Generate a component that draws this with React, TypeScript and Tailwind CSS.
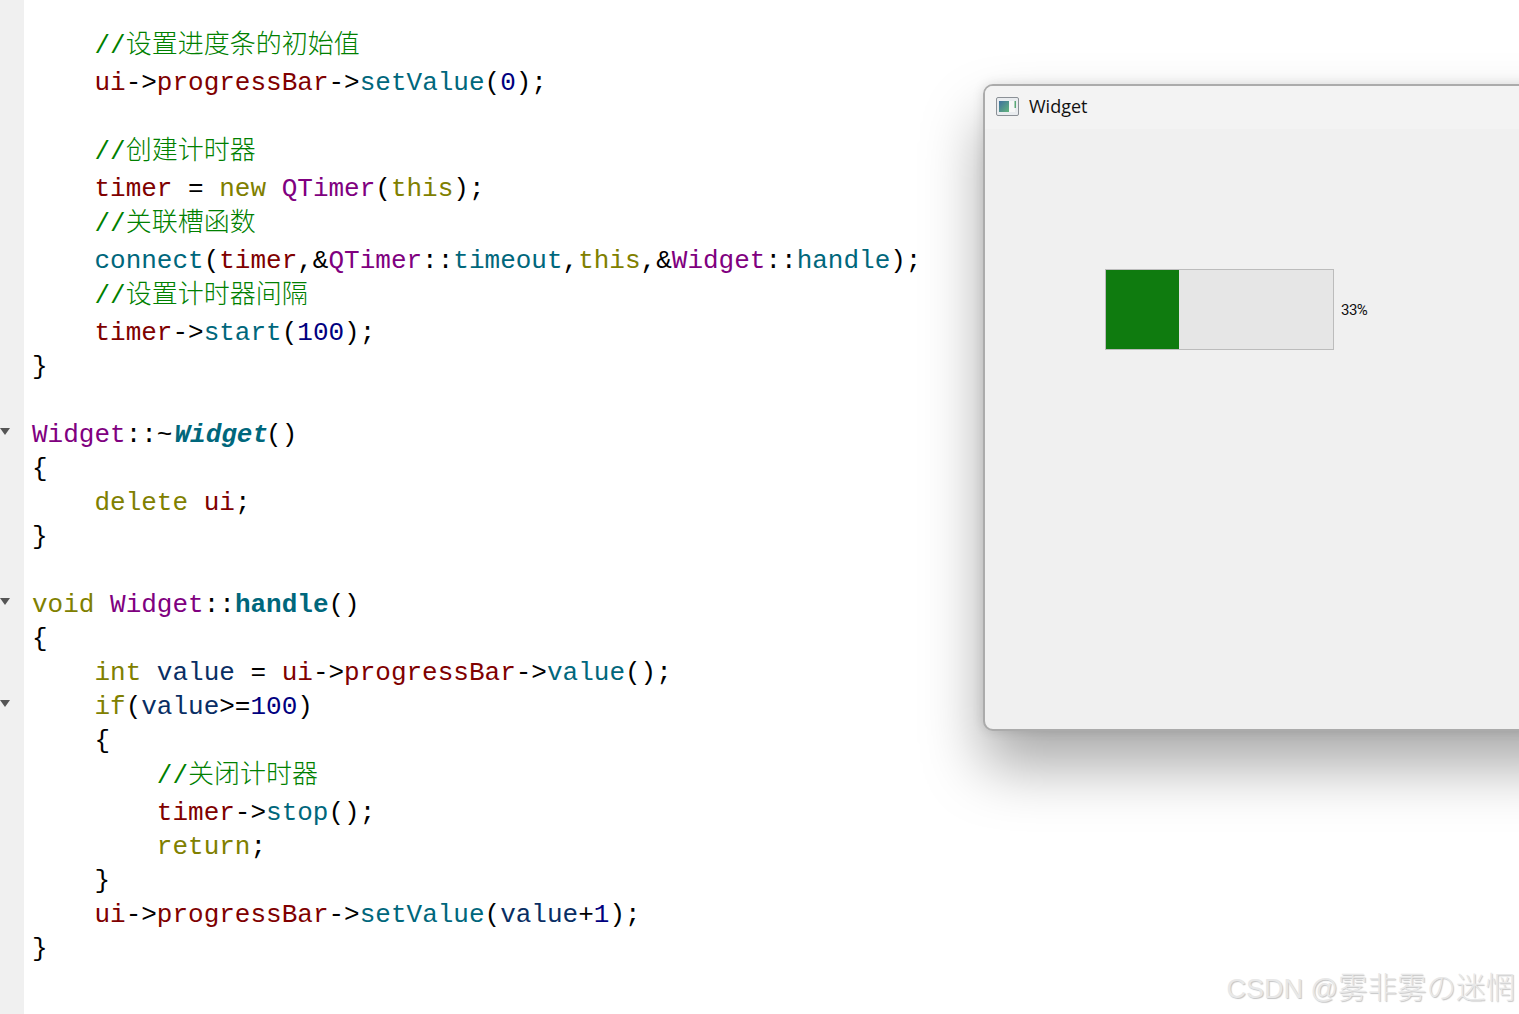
const r = "text-[#800000]"
const t = "text-[#00677c]"
const k = "text-[#808000]"
const p = "text-[#800080]"
const n = "text-[#000080]"
const v = "text-[#092e64]"
const b = "text-[#00677c] font-bold"
const i = "text-[#00677c] font-bold italic ml-[2px] -mr-[2px]"

type Token = [string, string?]
type Line = { tokens?: Token[]; comment?: string; indent?: number; fold?: boolean }

const lines: Line[] = [
  { indent: 1, comment: "设置进度条的初始值" },
  { indent: 1, tokens: [["ui", r], ["->"], ["progressBar", r], ["->"], ["setValue", t], ["("], ["0", n], [");"]] },
  {},
  { indent: 1, comment: "创建计时器" },
  { indent: 1, tokens: [["timer", r], [" = "], ["new", k], [" "], ["QTimer", p], ["("], ["this", k], [");"]] },
  { indent: 1, comment: "关联槽函数" },
  { indent: 1, tokens: [["connect", t], ["("], ["timer", r], [",&"], ["QTimer", p], ["::"], ["timeout", t], [","], ["this", k], [",&"], ["Widget", p], ["::"], ["handle", t], [");"]] },
  { indent: 1, comment: "设置计时器间隔" },
  { indent: 1, tokens: [["timer", r], ["->"], ["start", t], ["("], ["100", n], [");"]] },
  { tokens: [["}"]] },
  {},
  { fold: true, tokens: [["Widget", p], ["::~"], ["Widget", i], ["()"]] },
  { tokens: [["{"]] },
  { indent: 1, tokens: [["delete", k], [" "], ["ui", r], [";"]] },
  { tokens: [["}"]] },
  {},
  { fold: true, tokens: [["void", k], [" "], ["Widget", p], ["::"], ["handle", b], ["()"]] },
  { tokens: [["{"]] },
  { indent: 1, tokens: [["int", k], [" "], ["value", v], [" = "], ["ui", r], ["->"], ["progressBar", r], ["->"], ["value", t], ["();"]] },
  { indent: 1, fold: true, tokens: [["if", k], ["("], ["value", v], [">="], ["100", n], [")"]] },
  { indent: 1, tokens: [["{"]] },
  { indent: 2, comment: "关闭计时器" },
  { indent: 2, tokens: [["timer", r], ["->"], ["stop", t], ["();"]] },
  { indent: 2, tokens: [["return", k], [";"]] },
  { indent: 1, tokens: [["}"]] },
  { indent: 1, tokens: [["ui", r], ["->"], ["progressBar", r], ["->"], ["setValue", t], ["("], ["value", v], ["+"], ["1", n], [");"]] },
  { tokens: [["}"]] },
]

const CodeLine = ({ line }: { line: Line }) => {
  const pad = "    ".repeat(line.indent ?? 0)
  return (
    <div className={`relative whitespace-pre ${line.comment ? "h-[38px] leading-[30px]" : "h-[34px] leading-[36px]"}`}>
      {line.fold && (
        <div className="absolute left-[-32px] top-[11px] w-0 h-0 border-l-[5px] border-r-[5px] border-t-[7px] border-l-transparent border-r-transparent border-t-[#555]" />
      )}
      {pad}
      {line.comment && (
        <span className="text-[#008000]">
          //<span className="font-['Noto_Sans_CJK_SC',sans-serif] font-light">{line.comment}</span>
        </span>
      )}
      {line.tokens?.map(([text, color], idx) => (
        <span key={idx} className={color ?? "text-black"}>
          {text}
        </span>
      ))}
    </div>
  )
}

const WindowIcon = () => (
  <svg width="23" height="19" viewBox="0 0 23 19">
    <defs>
      <linearGradient id="ico" x1="0" y1="0" x2="1" y2="1">
        <stop offset="0" stopColor="#3f6f9f" />
        <stop offset="1" stopColor="#63b57c" />
      </linearGradient>
    </defs>
    <rect x="0.5" y="0.5" width="22" height="18" rx="1.5" fill="#e9ecef" stroke="#8b9096" />
    <rect x="3" y="4" width="10" height="11" fill="url(#ico)" />
    <rect x="13" y="4" width="6" height="11" fill="#f7f7f7" />
    <rect x="18.5" y="4" width="1.5" height="7" fill="#5aa877" />
  </svg>
)

const App = () => {
  return (
    <div className="relative w-[1519px] h-[1014px] overflow-hidden bg-white">
      <div className="flex h-full">
        <div className="w-6 shrink-0 bg-[#f0f0f0]" />
        <div className="pl-2 pt-[27px] text-[26px] font-['Liberation_Mono','Noto_Sans_CJK_SC',monospace]">
          {lines.map((line, idx) => (
            <CodeLine key={idx} line={line} />
          ))}
        </div>
      </div>

      <div className="absolute left-[983px] top-[84px] w-[600px] h-[647px] rounded-[10px] border-2 border-[#ababab] bg-[#f0f0f0] shadow-[0_35px_60px_rgba(0,0,0,0.34),0_0_12px_rgba(0,0,0,0.12)] overflow-hidden">
        <div className="h-[43px] flex items-center gap-[10px] pl-[11px] pb-[3px] bg-[#f3f3f3]">
          <WindowIcon />
          <span className="text-[18px] text-[#111] font-['Open_Sans',sans-serif]">Widget</span>
        </div>
        <div className="flex items-center gap-[7px] pl-[120px] pt-[140px]">
          <div className="w-[229px] h-[81px] border border-[#bcbcbc] bg-[#e6e6e6]">
            <div className="w-[73px] h-full bg-[#0f7b0f]" />
          </div>
          <span className="mt-px text-[15px] text-[#111] font-['Roboto',sans-serif] tracking-[-0.5px]">33%</span>
        </div>
      </div>

      <div className="absolute right-[4px] top-[968px] text-[29.5px] leading-[40px] text-[#e8e8e8] [text-shadow:1px_1px_1px_#c4c4c4] font-['Liberation_Sans','Noto_Sans_CJK_SC',sans-serif] font-light">
        <span className="text-[27px]">CSDN @</span>雾非雾の迷惘
      </div>
    </div>
  )
}

export default App
